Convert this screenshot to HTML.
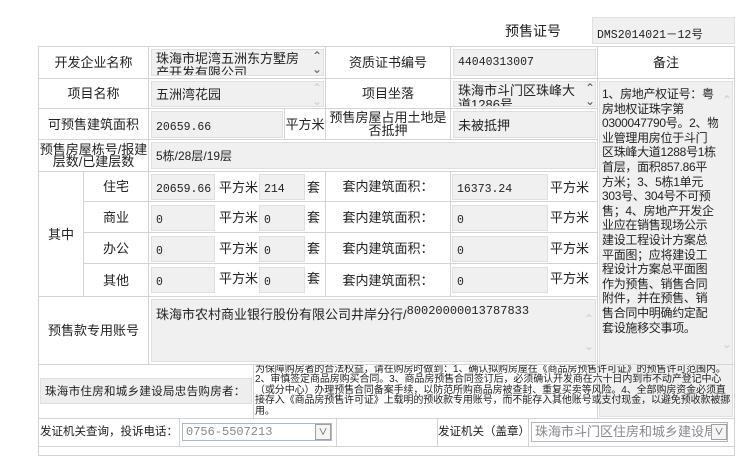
<!DOCTYPE html>
<html><head><meta charset="utf-8"><style>
*{box-sizing:border-box;margin:0;padding:0}
body{width:750px;height:450px;background:#fff;position:relative;overflow:hidden;font-family:"Liberation Sans","Noto Sans CJK SC",sans-serif;font-size:13px;color:#222}
.c{position:absolute;border:1px solid #d4d4d4;display:flex;align-items:center;justify-content:center;text-align:center;line-height:13px}
.b{position:absolute;background:#f0f0f0;border:1px solid #e0e0e0;font-size:12px;padding-left:4px;display:flex;align-items:center;color:#222}
.m{font-family:"Liberation Mono","Noto Sans CJK SC",monospace;font-size:11.5px}
.t{position:absolute;font-size:13px}
.sb{position:absolute;color:#999;font-size:12px;line-height:13px}
</style></head><body>
<div class="t" style="left:505px;top:21px;font-size:14px">预售证号</div>
<div class="b m" style="left:592px;top:17px;width:143px;height:27px;padding-top:6px">DMS2014021－12号</div>

<div class="c" style="left:38px;top:46px;width:111px;height:33px">开发企业名称</div>
<div class="c" style="left:148px;top:46px;width:178px;height:33px"></div>
<div class="b" style="left:151px;top:49px;width:173px;height:27px;align-items:flex-start;overflow:hidden;font-size:13px;line-height:14px;padding-top:2px;padding-right:14px">珠海市坭湾五洲东方墅房产开发有限公司</div>
<div class="sb" style="left:312px;top:50px;color:#555">⌃<br>⌄</div>
<div class="c" style="left:325px;top:46px;width:126px;height:33px">资质证书编号</div>
<div class="c" style="left:450px;top:46px;width:148px;height:33px"></div>
<div class="b m" style="left:453px;top:49px;width:143px;height:27px">44040313007</div>
<div class="c" style="left:597px;top:46px;width:138px;height:33px">备注</div>

<div class="c" style="left:38px;top:78px;width:111px;height:31px">项目名称</div>
<div class="c" style="left:148px;top:78px;width:178px;height:31px"></div>
<div class="b" style="left:151px;top:81px;width:173px;height:26px;align-items:flex-start;font-size:13px;padding-top:2px">五洲湾花园</div>
<div class="sb" style="left:312px;top:82px;color:#ccc">⌃<br>⌄</div>
<div class="c" style="left:325px;top:78px;width:126px;height:31px">项目坐落</div>
<div class="c" style="left:450px;top:78px;width:148px;height:31px"></div>
<div class="b" style="left:453px;top:81px;width:143px;height:26px;align-items:flex-start;overflow:hidden;font-size:13px;line-height:14px;padding-top:2px;padding-right:16px">珠海市斗门区珠峰大道1286号</div>
<div class="sb" style="left:585px;top:82px;color:#555">⌃<br>⌄</div>

<div class="c" style="left:38px;top:108px;width:111px;height:32px">可预售建筑面积</div>
<div class="c" style="left:148px;top:108px;width:137px;height:32px"></div>
<div class="b m" style="left:151px;top:111px;width:132px;height:27px;padding-top:6px">20659.66</div>
<div class="c" style="left:284px;top:108px;width:42px;height:32px">平方米</div>
<div class="c" style="left:325px;top:108px;width:126px;height:32px;line-height:13px">预售房屋占用土地是否抵押</div>
<div class="c" style="left:450px;top:108px;width:148px;height:32px"></div>
<div class="b" style="left:453px;top:111px;width:143px;height:27px;font-size:13px">未被抵押</div>

<div class="c" style="left:38px;top:139px;width:111px;height:33px;line-height:12px">预售房屋栋号/报建层数/已建层数</div>
<div class="c" style="left:148px;top:139px;width:450px;height:33px"></div>
<div class="b" style="left:151px;top:142px;width:445px;height:27px;font-size:12px">5栋/28层/19层</div>

<div class="c" style="left:38px;top:171px;width:46px;height:126px">其中</div>

<div class="c" style="left:83px;top:171px;width:66px;height:31px">住宅</div>
<div class="c" style="left:83px;top:201px;width:66px;height:32px">商业</div>
<div class="c" style="left:83px;top:232px;width:66px;height:32px">办公</div>
<div class="c" style="left:83px;top:263px;width:66px;height:34px">其他</div>

<div class="c" style="left:148px;top:171px;width:178px;height:31px"></div>
<div class="c" style="left:148px;top:201px;width:178px;height:32px"></div>
<div class="c" style="left:148px;top:232px;width:178px;height:32px"></div>
<div class="c" style="left:148px;top:263px;width:178px;height:34px"></div>

<div class="b m" style="left:151px;top:174px;width:64px;height:26px;padding-top:4px">20659.66</div>
<div class="t" style="left:219px;top:177px">平方米</div>
<div class="b m" style="left:259px;top:174px;width:46px;height:26px;padding-top:4px">214</div>
<div class="t" style="left:307px;top:177px">套</div>

<div class="b m" style="left:151px;top:205px;width:64px;height:26px;padding-top:4px">0</div>
<div class="t" style="left:219px;top:207px">平方米</div>
<div class="b m" style="left:259px;top:205px;width:46px;height:26px;padding-top:4px">0</div>
<div class="t" style="left:307px;top:207px">套</div>

<div class="b m" style="left:151px;top:236px;width:64px;height:26px;padding-top:4px">0</div>
<div class="t" style="left:219px;top:238px">平方米</div>
<div class="b m" style="left:259px;top:236px;width:46px;height:26px;padding-top:4px">0</div>
<div class="t" style="left:307px;top:238px">套</div>

<div class="b m" style="left:151px;top:267px;width:64px;height:26px;padding-top:4px">0</div>
<div class="t" style="left:219px;top:268px">平方米</div>
<div class="b m" style="left:259px;top:267px;width:46px;height:26px;padding-top:4px">0</div>
<div class="t" style="left:307px;top:268px">套</div>

<div class="c" style="left:325px;top:171px;width:126px;height:31px">套内建筑面积：</div>
<div class="c" style="left:325px;top:201px;width:126px;height:32px">套内建筑面积：</div>
<div class="c" style="left:325px;top:232px;width:126px;height:32px">套内建筑面积：</div>
<div class="c" style="left:325px;top:263px;width:126px;height:34px">套内建筑面积：</div>

<div class="c" style="left:450px;top:171px;width:148px;height:31px"></div>
<div class="c" style="left:450px;top:201px;width:148px;height:32px"></div>
<div class="c" style="left:450px;top:232px;width:148px;height:32px"></div>
<div class="c" style="left:450px;top:263px;width:148px;height:34px"></div>
<div class="b m" style="left:452px;top:174px;width:96px;height:26px;padding-top:4px">16373.24</div>
<div class="t" style="left:550px;top:177px">平方米</div>
<div class="b m" style="left:452px;top:205px;width:96px;height:26px;padding-top:4px">0</div>
<div class="t" style="left:550px;top:207px">平方米</div>
<div class="b m" style="left:452px;top:236px;width:96px;height:26px;padding-top:4px">0</div>
<div class="t" style="left:550px;top:238px">平方米</div>
<div class="b m" style="left:452px;top:267px;width:96px;height:26px;padding-top:4px">0</div>
<div class="t" style="left:550px;top:268px">平方米</div>

<div class="c" style="left:597px;top:78px;width:138px;height:341px"></div>
<div class="b" style="left:599px;top:81px;width:134px;height:336px;align-items:flex-start;display:block;font-size:12px;line-height:14.6px;text-align:left;padding:5px 0 0 2px;white-space:nowrap;overflow:hidden;letter-spacing:-0.3px">1、房地产权证号：粤<br>房地权证珠字第<br>0300047790号。2、物<br>业管理用房位于斗门<br>区珠峰大道1288号1栋<br>首层，面积857.86平<br>方米；3、5栋1单元<br>303号、304号不可预<br>售；4、房地产开发企<br>业应在销售现场公示<br>建设工程设计方案总<br>平面图；应将建设工<br>程设计方案总平面图<br>作为预售、销售合同<br>附件，并在预售、销<br>售合同中明确约定配<br>套设施移交事项。</div>
<div style="position:absolute;left:718px;top:82px;width:14px;height:334px;background:#f0f0f0"></div>
<div class="sb" style="left:722px;top:94px;color:#ccc">⌃</div>
<div class="sb" style="left:722px;top:338px;color:#ccc">⌄</div>

<div class="c" style="left:38px;top:296px;width:111px;height:69px">预售款专用账号</div>
<div class="c" style="left:148px;top:296px;width:450px;height:69px"></div>
<div class="b" style="left:151px;top:299px;width:445px;height:63px;align-items:flex-start;font-size:13px;padding-top:4px">珠海市农村商业银行股份有限公司井岸分行/<span class="m" style="font-size:12px">80020000013787833</span></div>
<div class="sb" style="left:584px;top:313px;color:#ccc">⌃</div>
<div class="sb" style="left:584px;top:340px;color:#ccc">⌄</div>

<div class="c" style="left:38px;top:364px;width:216px;height:55px"></div>
<div class="b" style="left:40px;top:378px;width:212px;height:26px;font-size:11.5px;background:#eee;letter-spacing:0.3px">珠海市住房和城乡建设局忠告购房者：</div>
<div class="c" style="left:253px;top:364px;width:482px;height:55px"></div>
<div style="position:absolute;left:255px;top:365px;width:478px;font-size:10px;line-height:10.4px;letter-spacing:-0.1px;white-space:nowrap;overflow:hidden">为保障购房者的合法权益，请在购房时做到：1、确认拟购房屋在《商品房预售许可证》的预售许可范围内。<br>2、审慎签定商品房购买合同。3、商品房预售合同签订后，必须确认开发商在六十日内到市不动产登记中心<br>（或分中心）办理预售合同备案手续，以防范所购商品房被查封、重复买卖等风险。4、全部购房资金必须直<br>接存入《商品房预售许可证》上载明的预收款专用账号，而不能存入其他账号或支付现金，以避免预收款被挪<br>用。</div>

<div class="c" style="left:38px;top:418px;width:142px;height:29px;font-size:11.5px">发证机关查询，投诉电话：</div>
<div class="c" style="left:179px;top:418px;width:158px;height:29px"></div>
<div style="position:absolute;left:182px;top:423px;width:150px;height:18px;border:1px solid #a8b8d0;font-size:12px;color:#888;padding-left:3px;line-height:16px" class="m">0756-5507213</div>
<div style="position:absolute;left:315px;top:424px;width:16px;height:16px;border:1px solid #a0a0a0;background:#f4f4f4;font-size:9px;text-align:center;line-height:14px;color:#444">∨</div>
<div class="c" style="left:336px;top:418px;width:102px;height:29px"></div>
<div class="c" style="left:437px;top:418px;width:92px;height:29px;font-size:11.5px">发证机关（盖章）</div>
<div class="c" style="left:528px;top:418px;width:207px;height:29px"></div>
<div style="position:absolute;left:531px;top:422px;width:197px;height:20px;border:1px solid #a8b8d0;font-size:13px;color:#888;padding-left:3px;line-height:18px;white-space:nowrap;overflow:hidden">珠海市斗门区住房和城乡建设局</div>
<div style="position:absolute;left:711px;top:424px;width:16px;height:16px;border:1px solid #a0a0a0;background:#f4f4f4;font-size:9px;text-align:center;line-height:14px;color:#444">∨</div>
<div class="c" style="left:38px;top:446px;width:697px;height:10px"></div>
</body></html>
